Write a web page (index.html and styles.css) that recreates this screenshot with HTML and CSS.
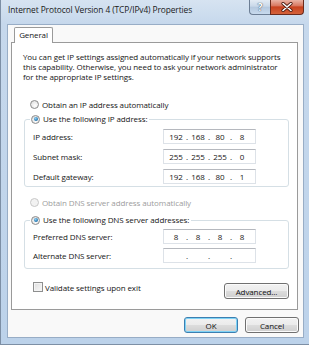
FILE: index.html
```html
<!DOCTYPE html>
<html lang="en">
<head>
    <meta charset="UTF-8">
    <title>Internet Protocol Version 4 (TCP/IPv4) Properties</title>
    <link rel="stylesheet" href="styles.css">
</head>
<body>

    <div class="window">

        <!-- Title bar -->
        <div class="titlebar">
            <span class="title">Internet Protocol Version 4 (TCP/IPv4) Properties</span>
            <div class="caption-btns">
                <span class="cap-btn help">?</span>
                <span class="cap-btn close">
                    <svg width="12" height="10" viewBox="0 0 12 10">
                        <path d="M2 1.5 L10 8.5 M10 1.5 L2 8.5" stroke="#4a1a10" stroke-width="3.2" stroke-linecap="round"/>
                        <path d="M2 1.5 L10 8.5 M10 1.5 L2 8.5" stroke="#fff" stroke-width="1.6" stroke-linecap="round"/>
                    </svg>
                </span>
            </div>
        </div>

        <div class="client">
            <div class="tabs">
                <span class="tab">General</span>
            </div>

            <div class="tab-page">
                <p class="intro">You can get IP settings assigned automatically if your network supports this capability. Otherwise, you need to ask your network administrator for the appropriate IP settings.</p>

                <div class="option">
                    <span class="radio"></span>
                    <span>Obtain an IP address automatically</span>
                </div>

                <fieldset class="group">
                    <legend class="option">
                        <span class="radio checked"></span>
                        <span>Use the following IP address:</span>
                    </legend>
                    <div class="field-row">
                        <span class="field-label">IP address:</span>
                        <div class="ip-box"><span>192</span><i>.</i><span>168</span><i>.</i><span>80</span><i>.</i><span>8</span></div>
                    </div>
                    <div class="field-row">
                        <span class="field-label">Subnet mask:</span>
                        <div class="ip-box"><span>255</span><i>.</i><span>255</span><i>.</i><span>255</span><i>.</i><span>0</span></div>
                    </div>
                    <div class="field-row">
                        <span class="field-label">Default gateway:</span>
                        <div class="ip-box"><span>192</span><i>.</i><span>168</span><i>.</i><span>80</span><i>.</i><span>1</span></div>
                    </div>
                </fieldset>

                <div class="option option-dns disabled">
                    <span class="radio"></span>
                    <span>Obtain DNS server address automatically</span>
                </div>

                <fieldset class="group group-dns">
                    <legend class="option">
                        <span class="radio checked"></span>
                        <span>Use the following DNS server addresses:</span>
                    </legend>
                    <div class="field-row">
                        <span class="field-label">Preferred DNS server:</span>
                        <div class="ip-box"><span>8</span><i>.</i><span>8</span><i>.</i><span>8</span><i>.</i><span>8</span></div>
                    </div>
                    <div class="field-row">
                        <span class="field-label">Alternate DNS server:</span>
                        <div class="ip-box"><span></span><i>.</i><span></span><i>.</i><span></span><i>.</i><span></span></div>
                    </div>
                </fieldset>

                <div class="bottom-row">
                    <div class="check-row">
                        <span class="checkbox"></span>
                        <span>Validate settings upon exit</span>
                    </div>
                    <button class="btn btn-advanced">Advanced...</button>
                </div>
            </div>

            <div class="dialog-buttons">
                <button class="btn btn-default">OK</button>
                <button class="btn">Cancel</button>
            </div>
        </div>
    </div>

</body>
</html>
```

FILE: styles.css
```css
body {
    margin: 0;
    font-family: "Open Sans", "DejaVu Sans", sans-serif;
    font-size: 8px;
    letter-spacing: -0.1px;
    color: #161616;
}

/* Window frame */
.window {
    width: 309px;
    height: 345px;
    box-sizing: border-box;
    padding: 0 5px 6px 6px;
    display: flex;
    flex-direction: column;
    background: linear-gradient(180deg, #d6e3f1 0, #c6d8ec 24px, #bcd2ea 100%);
    border-left: 1px solid #7d8fa5;
    border-bottom: 1px solid #7d8fa5;
}

.titlebar {
    height: 24px;
    display: flex;
    align-items: flex-start;
}

.title {
    padding: 4px 0 0 1px;
    font-size: 8.4px;
    line-height: 12px;
    color: #1a1a1a;
}

.caption-btns {
    margin-left: auto;
    display: flex;
}

.cap-btn {
    height: 15px;
    box-sizing: border-box;
    display: flex;
    align-items: center;
    justify-content: center;
    border: 1px solid #6c7e95;
    border-top: none;
}

.help {
    width: 21px;
    border-right: none;
    border-radius: 0 0 0 4px;
    background: linear-gradient(180deg, #e3ebf4 0, #c9d8e9 45%, #b4c8de 50%, #c8daee 100%);
    color: #fff;
    font-size: 10px;
    font-weight: bold;
    text-shadow: 0 0 1px #3d4f66, 0 0 1px #3d4f66;
}

.close {
    width: 34px;
    border-color: #6b2a1c;
    border-radius: 0 0 4px 0;
    background: linear-gradient(180deg, #eab3a5 0, #d97a63 40%, #c8421f 50%, #d4623b 100%);
}

/* Client area */
.client {
    flex: 1;
    background: #f9f9f9;
    border: 1px solid #98adc6;
    padding: 2px 5px 0 3px;
}

.tabs {
    display: flex;
    padding-left: 3px;
}

.tab {
    position: relative;
    z-index: 1;
    width: 37px;
    height: 15px;
    line-height: 14px;
    text-align: center;
    background: #fff;
    border: 1px solid #9a9a9a;
    border-bottom: none;
    border-radius: 2px 2px 0 0;
    margin-bottom: -1px;
}

.tab-page {
    background: #fff;
    border: 1px solid #9a9a9a;
    padding: 9px 8px 10px 11px;
}

.intro {
    margin: 0;
    line-height: 10px;
}

/* Radio and check */
.option {
    display: flex;
    align-items: center;
    gap: 3px;
    height: 12px;
    margin-top: 16px;
    padding-left: 7px;
}

.option-dns {
    margin-top: 9px;
}

.disabled {
    color: #9d9d9d;
}

.radio {
    width: 9px;
    height: 9px;
    box-sizing: border-box;
    border-radius: 50%;
    border: 1px solid #8b8b8b;
    background: radial-gradient(circle at 60% 65%, #fff 0, #e4e4e4 70%);
    position: relative;
}

.disabled .radio {
    border-color: #c8c8c8;
    background: #f2f2f2;
}

.radio.checked::after {
    content: "";
    position: absolute;
    left: 1.5px;
    top: 1.5px;
    width: 4px;
    height: 4px;
    border-radius: 50%;
    background: radial-gradient(circle at 40% 35%, #8fd0f6 0, #2d7fb6 60%, #1a4f80 100%);
}

.checkbox {
    width: 10px;
    height: 10px;
    box-sizing: border-box;
    border: 1px solid #8e8f8f;
    background: linear-gradient(135deg, #dedede, #f8f8f8);
    box-shadow: inset 0 0 0 1px #f4f4f4;
}

/* Group boxes */
.group {
    margin: 3px 0 0 1px;
    padding: 0 0 2px 8px;
    border: 1px solid #d5dfe5;
    border-radius: 3px;
}

.group legend.option {
    margin: 0 0 0 -3px;
    padding: 0 2px 0 1px;
    line-height: 12px;
}

.group-dns {
    margin-top: 6px;
    padding-bottom: 5px;
}

.field-row {
    display: flex;
    align-items: center;
    height: 15px;
    margin-top: 5px;
}

.field-row:first-of-type {
    margin-top: 4px;
}

.group-dns .field-row {
    margin-top: 4px;
}

.group-dns .field-row:first-of-type {
    margin-top: 3px;
}

.field-label {
    width: 130px;
}

.ip-box {
    width: 93px;
    height: 15px;
    box-sizing: border-box;
    border: 1px solid #dde2e8;
    border-top-color: #b5b8be;
    padding-left: 3px;
    display: grid;
    grid-template-columns: 18px 4px 18px 4px 18px 4px 18px;
    align-items: center;
    line-height: 13px;
    text-align: center;
}

.ip-box i {
    font-style: normal;
}

.bottom-row {
    margin-top: 13px;
    display: flex;
    justify-content: space-between;
    align-items: flex-start;
}

.check-row {
    display: flex;
    align-items: center;
    gap: 2px;
    margin-left: 10px;
    height: 10px;
}

/* Buttons */
.btn {
    font-family: inherit;
    font-size: 8px;
    letter-spacing: -0.1px;
    color: #111;
    width: 54px;
    height: 16px;
    padding: 0;
    border: 1px solid #707070;
    border-radius: 3px;
    background: linear-gradient(180deg, #f2f2f2 0, #ebebeb 50%, #dddddd 50%, #cfcfcf 100%);
    box-shadow: inset 0 0 0 1px #fbfbfb;
}

.btn-advanced {
    width: 65px;
    margin-top: 1px;
}

.btn-default {
    border-color: #3c7fb1;
    box-shadow: inset 0 0 0 1px #7fd3f6;
}

.dialog-buttons {
    display: flex;
    justify-content: flex-end;
    gap: 7px;
    margin: 7px -1px 0 0;
}
```
